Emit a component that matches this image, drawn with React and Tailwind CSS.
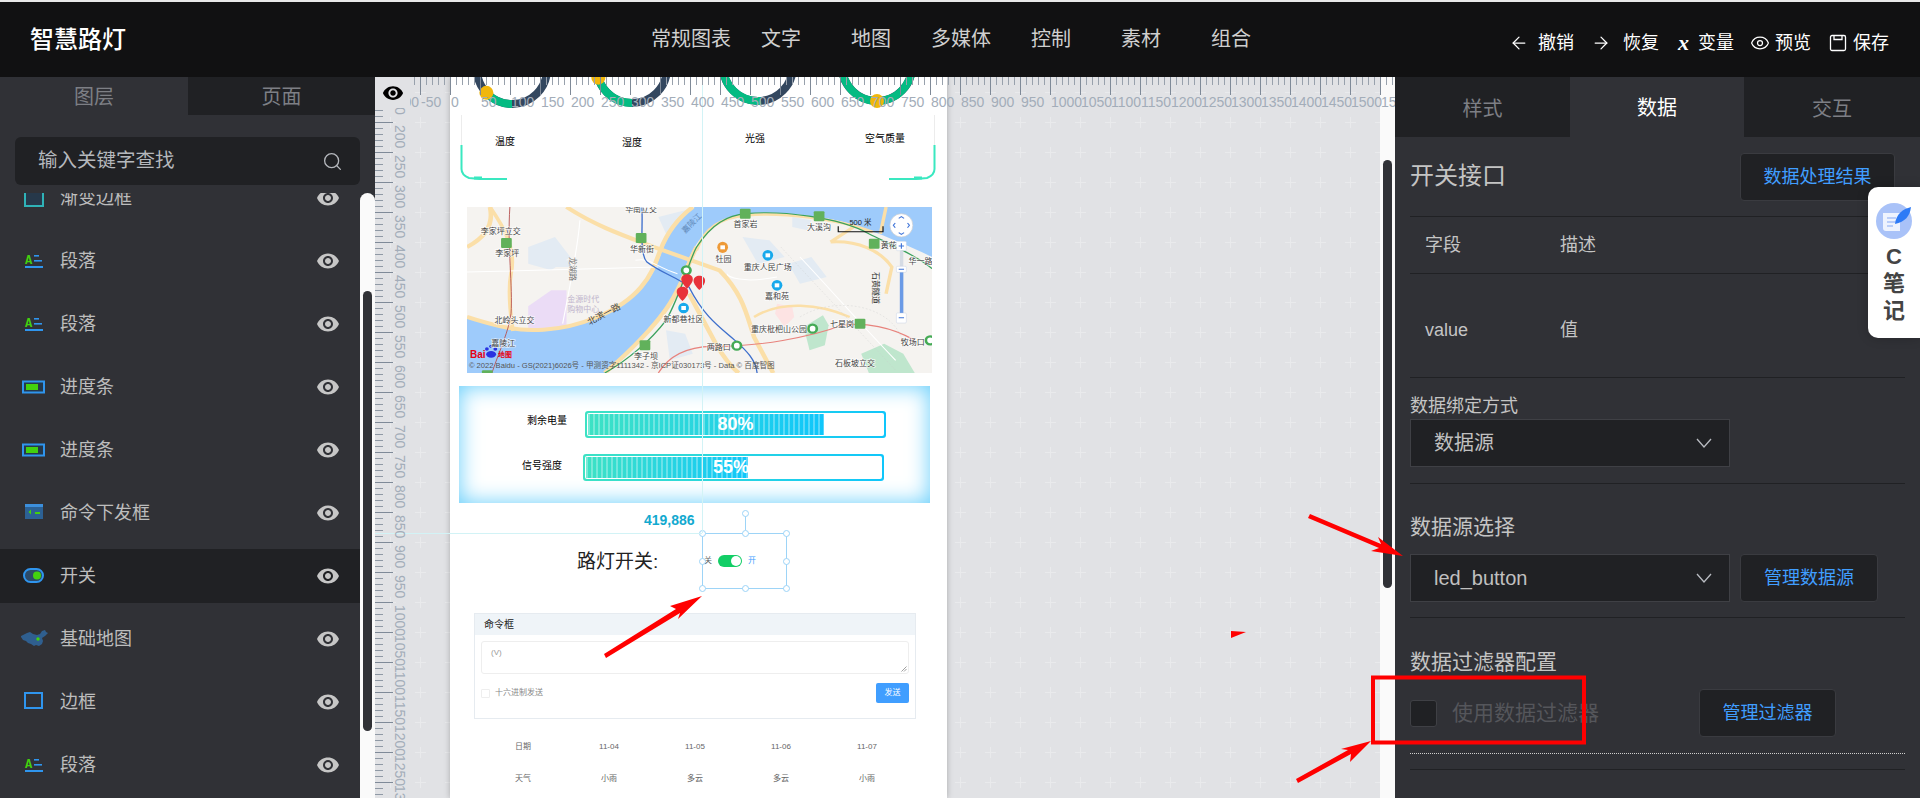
import { ArrowLeft, ArrowRight, Eye, Search } from 'lucide-react';

const navItems = ['常规图表', '文字', '地图', '多媒体', '控制', '素材', '组合'];

const layers = [
  { name: '渐变边框', icon: 'gradient' },
  { name: '段落', icon: 'para' },
  { name: '段落', icon: 'para' },
  { name: '进度条', icon: 'progress' },
  { name: '进度条', icon: 'progress' },
  { name: '命令下发框', icon: 'command' },
  { name: '开关', icon: 'switch', active: true },
  { name: '基础地图', icon: 'map' },
  { name: '边框', icon: 'border' },
  { name: '段落', icon: 'para' },
];

function VisibleEye({ className }) {
  return (
    <svg viewBox="0 0 24 24" className={className} fill="currentColor">
      <path d="M12 4.5C7 4.5 2.73 7.61 1 12c1.73 4.39 6 7.5 11 7.5s9.27-3.11 11-7.5c-1.73-4.39-6-7.5-11-7.5zM12 17c-2.76 0-5-2.24-5-5s2.24-5 5-5 5 2.24 5 5-2.24 5-5 5zm0-8c-1.66 0-3 1.34-3 3s1.34 3 3 3 3-1.34 3-3-1.34-3-3-3z" />
    </svg>
  );
}

function LayerIcon({ type }) {
  if (type === 'gradient') {
    return (
      <svg width="30" height="24" viewBox="0 0 30 24">
        <rect x="5" y="3" width="18" height="17" fill="#26384a" stroke="#2fb3b8" strokeWidth="2" />
      </svg>
    );
  }
  if (type === 'para') {
    return (
      <svg width="30" height="24" viewBox="0 0 30 24">
        <text x="5" y="15" fontSize="12" fontWeight="700" fill="#43d10f" fontFamily="Liberation Mono, monospace">A</text>
        <rect x="14" y="6" width="5" height="1.6" fill="#2f95ee" />
        <rect x="14" y="11" width="8" height="1.6" fill="#2f95ee" />
        <rect x="5" y="17" width="18" height="2" fill="#2f95ee" />
      </svg>
    );
  }
  if (type === 'progress') {
    return (
      <svg width="30" height="24" viewBox="0 0 30 24">
        <rect x="3" y="6.5" width="21" height="11" fill="#25384a" stroke="#2f95ee" strokeWidth="2" />
        <rect x="6" y="9" width="12" height="6" fill="#43d10f" />
      </svg>
    );
  }
  if (type === 'command') {
    return (
      <svg width="30" height="24" viewBox="0 0 30 24">
        <rect x="5" y="3" width="18" height="15" fill="#2c6195" />
        <rect x="5" y="3" width="18" height="3" fill="#3c8fdc" />
        <path d="M11 8.5 8.5 11l2.5 2.500z" fill="#43d10f" />
        <rect x="15" y="11" width="5" height="2" fill="#43d10f" />
      </svg>
    );
  }
  if (type === 'switch') {
    return (
      <svg width="30" height="24" viewBox="0 0 30 24">
        <rect x="4" y="5" width="19" height="13" rx="6.500" fill="#2c4a68" stroke="#2f95ee" strokeWidth="2" />
        <circle cx="17" cy="11.500" r="4" fill="#43d10f" />
      </svg>
    );
  }
  if (type === 'map') {
    return (
      <svg width="30" height="24" viewBox="0 0 30 24">
        <path d="M1 9 7 6l3-1 3 2 4 1 3-1 2-3 3-1 1 2 2 1-3 3-3 2 1 3-1 3-3 2-3-1-2 1-3-2-3-1-2-2-3-1-2-3z" fill="#2f5f8f" />
        <circle cx="18" cy="12" r="1.700" fill="#43d10f" />
      </svg>
    );
  }
  return (
    <svg width="30" height="24" viewBox="0 0 30 24">
      <rect x="5" y="3" width="17" height="15" fill="none" stroke="#2f95ee" strokeWidth="2" />
    </svg>
  );
}

// rulers sit over the page, ticks every 6px, numbers every 30px
function Rulers() {
  const topTicks = [];
  for (let x = 39; x <= 1020; x += 6) {
    const step = (x - 75) % 30 === 0;
    topTicks.push(<line key={x} x1={x + 0.5} x2={x + 0.5} y1="0" y2={step ? 18 : 8} stroke={step ? '#7f8a98' : '#98a1ac'} />);
  }
  const topLabels = [];
  for (let v = -100; v <= 1550; v += 50) {
    topLabels.push(<text key={v} x={75 + v * 0.6 + 1} y="30" fontSize="14" fill="#a3adb9">{v}</text>);
  }
  const sideTicks = [];
  for (let y = 33; y <= 725; y += 6) {
    const step = (y - 45) % 30 === 0;
    sideTicks.push(<line key={y} x1="0" x2={step ? 18 : 8} y1={y + 0.5} y2={y + 0.5} stroke={step ? '#7f8a98' : '#8f99a5'} />);
  }
  const sideLabels = [];
  for (let i = 0; i <= 22; i++) {
    const y = 48 + i * 30;
    sideLabels.push(<text key={i} x="20" y={y} fontSize="14" fill="#a3adb9" transform={`rotate(90 20 ${y})`}>{200 + i * 50}</text>);
  }
  return (
    <svg className="absolute left-0 top-0 w-[1020px] h-[721px] pointer-events-none" viewBox="0 0 1020 721" fontFamily="Liberation Sans, sans-serif">
      {topTicks}
      {topLabels}
      {sideTicks}
      <text x="20" y="30" fontSize="14" fill="#a3adb9" transform="rotate(90 20 30)">0</text>
      {sideLabels}
    </svg>
  );
}

function arc(cx, cy, r, from, to) {
  const p = (a) => [cx + r * Math.cos((a * Math.PI) / 180), cy + r * Math.sin((a * Math.PI) / 180)];
  const [x0, y0] = p(from);
  const [x1, y1] = p(to);
  return `M${x0} ${y0}A${r} ${r} 0 ${to - from > 180 ? 1 : 0} 1 ${x1} ${y1}`;
}

function Gauges() {
  const items = [
    { cx: 62, cy: -8, from: 90, to: 137, dot: 137 },
    { cx: 182, cy: -9, from: 90, to: 164, dot: 164 },
    { cx: 308, cy: -11, from: 85, to: 200 },
    { cx: 427, cy: -11, from: -20, to: 200, dot: 90 },
  ];
  return (
    <svg className="absolute left-0 top-0 w-[497px] h-[44px]" viewBox="0 0 497 44">
      {items.map((g) => (
        <g key={g.cx}>
          <circle cx={g.cx} cy={g.cy} r="35" fill="none" stroke="#33475f" strokeWidth="8" />
          <path d={arc(g.cx, g.cy, 35, g.from, g.to)} fill="none" stroke="#04bb82" strokeWidth="8" />
          {g.dot && (
            <circle cx={g.cx + 35 * Math.cos((g.dot * Math.PI) / 180)} cy={g.cy + 35 * Math.sin((g.dot * Math.PI) / 180)} r="7" fill="#f1b70c" />
          )}
        </g>
      ))}
    </svg>
  );
}

function CardFrame() {
  return (
    <svg className="absolute left-[10px] top-[38px] w-[476px] h-[66px]" viewBox="0 0 476 66" fill="none">
      <path d="M1.500 0V30M474.500 0V30" stroke="#ececec" />
      <path d="M1.500 30V54Q1.500 60 9 63L20 64H47" stroke="#3ae8c0" strokeWidth="2" />
      <path d="M474.500 30V54Q474.500 60 467 63L456 64H429" stroke="#3ae8c0" strokeWidth="2" />
      <path d="M14 63h8M454 63h8" stroke="#3ae8c0" strokeWidth="3" />
    </svg>
  );
}

const mapLabels = [
  ['华南立交', 735, 448], ['李家坪立交', 368, 516], ['李家坪', 385, 582], ['华新街', 737, 569],
  ['首家岩', 1008, 495], ['大溪沟', 1200, 504], ['黄花', 1382, 556], ['华一路', 1465, 604],
  ['牡园', 950, 598], ['重庆人民广场', 1066, 623], ['嘉和苑', 1090, 710], ['新都巷社区', 846, 778],
  ['北岭头立交', 404, 782], ['重庆枇杷山公园', 1095, 810], ['七星岗', 1260, 793], ['两路口', 938, 862],
  ['李子坝', 748, 890], ['牧场口', 1445, 847], ['石板坡立交', 1294, 911], ['嘉陵江', 375, 852],
];

function BaiduMap() {
  const sx = 465 / 1215;
  const sy = 1 / 3;
  const tx = (x) => (x - 280) * sx;
  const ty = (y) => (y - 440) * sy;
  return (
    <svg className="absolute left-[17px] top-[130px] w-[465px] h-[166px]" viewBox="0 0 465 166" fontFamily="Noto Sans CJK SC, sans-serif">
      <rect width="465" height="166" fill="#f5f3f0" />
      <g transform={`scale(${sx} ${sy})`}>
        <g transform="translate(-280 -440)" fill="none">
          <path d="M440 560l70-30 40 60-50 40-60-20zM500 600h50v20h-50zM780 470l70-20 10 30-60 40zM1000 530l70 10 40 50-70 20zM1120 610l60-20 40 60-70 20zM800 810l50 10 20 60-60 20zM1130 470l50 10-10 30-40-10z" fill="#e3ebf3" />
          <path d="M500 690h40v110l-100 8v-70z" fill="#ebdcf6" />
          <path d="M1090 730l40 10 5 30-25 30-25-40z" fill="#fde3e3" />
          <path d="M1160 800l50-35 15 30-10 60-40 15z" fill="#bfe6cd" />
          <path d="M1310 880l60-30 50 30 30 58h-120z" fill="#bfe6cd" />
          <path d="M280 770C340 790 400 820 480 812C570 805 680 760 740 680C770 640 780 600 790 570C810 510 840 470 875 440L1495 440L1495 590C1440 560 1380 530 1330 510C1250 470 1100 450 1010 460C950 470 900 510 875 560C860 590 850 620 830 680C800 760 720 860 640 938L280 938Z" fill="#9ecbfb" />
          <g stroke="#fbdfa8" strokeWidth="12">
            <path d="M280 560C330 530 350 490 340 440" />
            <path d="M340 440C370 490 410 560 395 640C385 700 395 770 400 812" strokeWidth="10" />
            <path d="M280 770C340 790 400 815 480 808C570 802 680 755 735 680C765 640 775 600 785 570C805 510 835 470 870 440" />
            <path d="M540 440C620 500 700 530 780 565L940 630C1000 700 1010 760 1030 830L1080 938" />
            <path d="M880 560C860 600 850 650 825 700C790 780 700 880 640 938" />
            <path d="M880 570C900 500 950 470 1010 465C1100 455 1250 475 1340 515" strokeWidth="8" />
            <path d="M1230 545L1290 500M1230 545C1300 540 1360 570 1390 620L1375 700M1375 440L1360 520" strokeWidth="9" />
            <path d="M860 700L930 850C950 890 970 920 990 938" />
            <path d="M1280 770C1200 730 1100 720 1030 770" strokeWidth="7" />
          </g>
          <g stroke="#ffffff" strokeWidth="3">
            <path d="M280 635L780 620M575 480C570 560 555 640 530 790M720 600C760 590 770 620 830 640" />
            <path d="M960 640C960 650 1000 670 1090 650M1150 590C1200 650 1300 780 1400 900" />
          </g>
          <path d="M1100 560L1400 930" stroke="#c9c9c9" strokeDasharray="5 5" />
          <path d="M1150 770C1250 700 1400 740 1420 850" stroke="#c9c9c9" strokeDasharray="5 5" />
          <path d="M392 440C385 560 400 680 395 760C390 810 365 870 345 938" stroke="#b5504f" strokeWidth="2.500" />
          <path d="M737 440C740 500 730 580 750 605C790 640 830 650 860 680C900 770 940 800 980 840C1010 870 1035 900 1038 938" stroke="#3e6fcc" strokeWidth="3.500" />
          <path d="M640 938C700 900 760 840 800 780C840 700 860 600 880 560C920 490 960 465 1010 460C1100 450 1250 470 1330 520C1400 560 1460 590 1495 625" stroke="#3ba15d" strokeWidth="3.500" />
          <path d="M780 938C800 900 840 860 920 858C1040 860 1180 830 1260 795C1320 785 1390 800 1450 840" stroke="#e8837d" strokeWidth="3.500" />
          {[[383, 548], [735, 533], [1007, 460], [1200, 468], [1344, 550], [1307, 790], [745, 855], [333, 945]].map(([x, y]) => (
            <rect key={x} x={x - 14} y={y - 15} width="28" height="30" rx="3" fill="#61b15b" />
          ))}
          {[[853, 630], [985, 856], [1490, 840], [1183, 805]].map(([x, y]) => (
            <ellipse key={x} cx={x} cy={y} rx="11" ry="12" fill="#fff" stroke="#44aa55" strokeWidth="7" />
          ))}
          {[[1066, 585], [1090, 675], [846, 743]].map(([x, y]) => (
            <g key={x}>
              <ellipse cx={x} cy={y} rx="14" ry="16" fill="#17a9ec" />
              <rect x={x - 6} y={y - 6} width="12" height="12" fill="#fff" />
            </g>
          ))}
          <ellipse cx="948" cy="561" rx="14" ry="17" fill="#ee9a38" />
          <rect x="942" y="555" width="12" height="12" fill="#fff" />
          {[[855, 663], [887, 667], [843, 700]].map(([x, y]) => (
            <path key={x} d={`M${x} ${y + 22}C${x - 12} ${y + 8} ${x - 15} ${y} ${x - 15} ${y - 6}C${x - 15} ${y - 26} ${x + 15} ${y - 26} ${x + 15} ${y - 6}C${x + 15} ${y} ${x + 12} ${y + 8} ${x} ${y + 22}Z`} fill="#e8323a" />
          ))}
          <ellipse cx="1415" cy="495" rx="30" ry="35" fill="#fff" stroke="#c9ccd2" strokeWidth="2" />
          <path d="M1408 474l7-5 7 5M1408 517l7 5 7-5M1399 488l-5 7 5 7M1431 488l5 7-5 7" stroke="#3f74d8" strokeWidth="3" />
          <rect x="1402" y="543" width="26" height="28" rx="3" fill="#fff" stroke="#b5c4dd" />
          <path d="M1408 557h14M1415 549v16" stroke="#3f74d8" strokeWidth="3" />
          <rect x="1411" y="571" width="9" height="190" fill="#d5dbe4" />
          <rect x="1411" y="632" width="9" height="128" fill="#6a9ae6" />
          <rect x="1402" y="618" width="26" height="18" rx="3" fill="#fff" stroke="#b5c4dd" />
          <rect x="1402" y="758" width="26" height="30" rx="3" fill="#fff" stroke="#b5c4dd" />
          <path d="M1408 627h14M1408 772h14" stroke="#3f74d8" strokeWidth="3" />
          <path d="M1250 498v16h117v-16" stroke="#111" strokeWidth="3" />
          <g fill="#2932e1">
            <ellipse cx="343" cy="882" rx="13" ry="10" />
            <circle cx="332" cy="866" r="5" />
            <circle cx="343" cy="858" r="5" />
            <circle cx="354" cy="866" r="5" />
          </g>
        </g>
      </g>
      {mapLabels.map(([label, x, y]) => (
        <text key={label} x={tx(x)} y={ty(y) + 2} fontSize="8" textAnchor="middle" fill="#444" stroke="#ffffff" strokeOpacity="0.7" strokeWidth="1.500" paintOrder="stroke">{label}</text>
      ))}
      <text x={tx(600)} y={ty(795)} fontSize="9" fill="#444" transform={`rotate(-28 ${tx(600)} ${ty(795)})`}>北滨一路</text>
      <text x={tx(850)} y={ty(520)} fontSize="8" fill="#5f88b8" transform={`rotate(-45 ${tx(850)} ${ty(520)})`}>嘉陵江</text>
      <text x={tx(1340)} y={ty(635)} fontSize="8" fill="#333" transform={`rotate(90 ${tx(1340)} ${ty(635)})`}>石黄隧道</text>
      <text x={tx(542)} y={ty(725)} fontSize="8" fill="#c0b4cc">金源时代</text>
      <text x={tx(542)} y={ty(755)} fontSize="8" fill="#c0b4cc">购物中心</text>
      <text x={tx(550)} y={ty(590)} fontSize="8" fill="#777" transform={`rotate(90 ${tx(550)} ${ty(590)})`}>龙湖路</text>
      <text x={tx(1308)} y={ty(495)} fontSize="7.500" textAnchor="middle" fill="#222" fontFamily="Liberation Sans, Noto Sans CJK SC, sans-serif">500 米</text>
      <text x={tx(288)} y={ty(892)} fontSize="10" fontWeight="700" fill="#e60012" fontFamily="Liberation Sans, sans-serif">Bai</text>
      <text x={tx(361)} y={ty(890)} fontSize="7" fontWeight="700" fill="#e60012">地图</text>
      <text x={tx(285)} y={ty(924)} fontSize="7.600" fill="#555" fontFamily="Liberation Sans, Noto Sans CJK SC, sans-serif">© 2022 Baidu - GS(2021)6026号 - 甲测资字1111342 - 京ICP证030173号 - Data © 百度智图</text>
    </svg>
  );
}

function ProgressBar({ className, fill, label }) {
  return (
    <div className={`absolute h-[27px] w-[301px] rounded-[3px] bg-gradient-to-r from-[#3de2c4] to-[#0fc6fb] p-[2px] ${className}`}>
      <div className="relative h-full rounded-[2px] bg-white p-[1px]">
        <div className={`h-full bg-gradient-to-r from-[#3de2c4] to-[#0fc6fb] overflow-hidden relative ${fill}`}>
          <div className="absolute inset-0 bg-[repeating-linear-gradient(90deg,rgba(255,255,255,0.3)_0_2px,transparent_2px_5px)]" />
        </div>
        <span className={`absolute inset-0 flex items-center justify-center text-[18px] font-bold text-white ${label === '55%' ? 'pr-[5px]' : ''}`}>{label}</span>
      </div>
    </div>
  );
}

function Handle({ className }) {
  return <span className={`absolute h-[7px] w-[7px] rounded-full border border-[#9dd4f7] bg-white ${className}`} />;
}

function DesignPage() {
  const dates = ['日期', '11-04', '11-05', '11-06', '11-07'];
  const weather = ['天气', '小雨', '多云', '多云', '小雨'];
  return (
    <div className="absolute left-[75px] top-0 h-full w-[497px] bg-white shadow-[0_0_6px_rgba(0,0,0,0.25)] overflow-hidden">
      <Gauges />
      <CardFrame />
      <span className="absolute left-[45px] top-[58px] text-[10px] leading-[14px] text-black">温度</span>
      <span className="absolute left-[172px] top-[59px] text-[10px] leading-[14px] text-black">湿度</span>
      <span className="absolute left-[295px] top-[55px] text-[10px] leading-[14px] text-black">光强</span>
      <span className="absolute left-[415px] top-[55px] text-[10px] leading-[14px] text-black">空气质量</span>
      <BaiduMap />

      <div className="absolute left-[9px] top-[309px] h-[117px] w-[471px] bg-white shadow-[inset_0_0_22px_#63cdfb]">
        <span className="absolute left-[68px] top-[28px] text-[10px] leading-[14px] text-black">剩余电量</span>
        <span className="absolute left-[63px] top-[73px] text-[10px] leading-[14px] text-black">信号强度</span>
        <ProgressBar className="left-[126px] top-[25px]" fill="w-[80%]" label="80%" />
        <ProgressBar className="left-[124px] top-[68px]" fill="w-[55%]" label="55%" />
      </div>

      <span className="absolute left-[194px] top-[435px] text-[14px] font-bold leading-[16px] text-[#12a9cf]">419,886</span>
      <span className="absolute left-[127px] top-[472px] text-[19px] leading-[26px] text-[#222]">路灯开关:</span>

      <div className="absolute left-[252px] top-[456px] h-[56px] w-[85px] border border-[#9dd4f7]">
        <div className="absolute left-[1px] top-[21px] flex items-center gap-[6px] text-[8px] leading-[12px]">
          <span className="text-[#666] w-[7px]">关</span>
          <span className="h-[12px] w-[24px] rounded-full bg-[#13ce66] relative ml-[1px]">
            <span className="absolute right-[1px] top-[1px] h-[10px] w-[10px] rounded-full bg-white" />
          </span>
          <span className="text-[#409eff]">开</span>
        </div>
        <Handle className="-left-[4px] -top-[4px]" />
        <Handle className="left-[39px] -top-[4px]" />
        <Handle className="-right-[4px] -top-[4px]" />
        <Handle className="-left-[4px] top-[24px]" />
        <Handle className="-right-[4px] top-[24px]" />
        <Handle className="-left-[4px] -bottom-[4px]" />
        <Handle className="left-[39px] -bottom-[4px]" />
        <Handle className="-right-[4px] -bottom-[4px]" />
        <span className="absolute left-[42px] -top-[18px] h-[14px] w-px bg-[#9dd4f7]" />
        <Handle className="left-[39px] -top-[24px]" />
      </div>

      <div className="absolute left-[24px] top-[536px] h-[106px] w-[442px] border border-[#e6ebf0] text-[8px] leading-[12px]">
        <div className="h-[21px] bg-[#eff4f8] pl-[9px] text-[10px] leading-[21px] text-[#222]">命令框</div>
        <div className="relative mx-[6px] mt-[6px] h-[33px] rounded-[3px] border border-[#eeeeee] pl-[9px] pt-[5px] text-[#999]">
          (V)
          <svg className="absolute bottom-[1px] right-[1px] h-[6px] w-[6px]" viewBox="0 0 6 6" stroke="#777" strokeWidth="0.700">
            <path d="M0.500 5.500 5.500 0.500M3 5.500 5.500 3" />
          </svg>
        </div>
        <div className="mx-[6px] mt-[9px] flex items-center">
          <span className="h-[9px] w-[9px] rounded-[1px] border border-[#eeeeee]" />
          <span className="ml-[5px] text-[#888]">十六进制发送</span>
          <span className="ml-auto flex h-[20px] w-[33px] items-center justify-center rounded-[2px] bg-[#409eff] text-white">发送</span>
        </div>
      </div>

      <div className="absolute left-[30px] top-[664px] grid w-[430px] grid-cols-5 gap-y-[20px] text-center text-[8px] leading-[12px] text-[#666]">
        {dates.map((d) => <span key={d}>{d}</span>)}
        {weather.map((d, i) => <span key={i}>{d}</span>)}
      </div>
    </div>
  );
}

function DarkButton({ className, children }) {
  return (
    <button className={`flex h-[48px] items-center justify-center rounded-[4px] border border-[#3a3b40] bg-[#202124] text-[18px] text-[#409eff] ${className}`}>
      {children}
    </button>
  );
}

function SelectBox({ children }) {
  return (
    <div className="flex h-[48px] w-[320px] items-center justify-between border border-[#3f4045] bg-[#202124] pl-[23px] pr-[17px] text-[20px] text-[#c0c0c0]">
      <span>{children}</span>
      <svg width="16" height="10" viewBox="0 0 16 10" fill="none" stroke="#b9bcc2" strokeWidth="1.300">
        <path d="M1 1l7 8 7-8" />
      </svg>
    </div>
  );
}

function Annotations() {
  return (
    <svg className="absolute left-0 top-0 w-[1920px] h-[798px] pointer-events-none" viewBox="0 0 1920 798" fill="#ff0000">
      <path d="M604 654 676 609 670 606 702 596 678 619 680 613 606 658z" />
      <path d="M1310 514 1381 544 1378 537 1403 556 1371 551 1379 548 1308 518z" />
      <path d="M1296 779 1348 750 1341 749 1371 741 1350 762 1351 754 1298 783z" />
      <path d="M1231 631 1246 632 1231 638z" />
      <rect x="1373" y="677.500" width="211" height="65" fill="none" stroke="#ff0000" strokeWidth="4" />
    </svg>
  );
}

export default function App() {
  return (
    <div className="relative flex h-[798px] w-[1920px] flex-col overflow-hidden bg-[#fafafa] font-['Liberation_Sans','Noto_Sans_CJK_SC',sans-serif]">
      <div className="h-[2px] bg-[#e8e8e8]" />
      <header className="relative z-10 flex h-[75px] items-center bg-[#111112] text-[20px]">
        <div className="w-[651px] pl-[30px] text-[24px] font-medium text-white">智慧路灯</div>
        <nav className="-ml-[5px] -mt-[1px] flex text-[#cfcfcf]">
          {navItems.map((item) => (
            <span key={item} className="w-[90px] text-center whitespace-nowrap">{item}</span>
          ))}
        </nav>
        <div className="ml-auto flex items-center pr-[31px] pt-[7px] text-[18px] text-white">
          <ArrowLeft size={20} strokeWidth={1.500} />
          <span className="ml-[9px]">撤销</span>
          <ArrowRight size={20} strokeWidth={1.500} className="ml-[17px]" />
          <span className="ml-[12px]">恢复</span>
          <span className="ml-[19px] font-['Liberation_Serif',serif] text-[22px] leading-[18px] font-bold italic">x</span>
          <span className="ml-[9px]">变量</span>
          <Eye size={20} strokeWidth={1.500} className="ml-[16px]" />
          <span className="ml-[5px]">预览</span>
          <svg width="18" height="18" viewBox="0 0 18 18" fill="none" stroke="#fff" strokeWidth="1.300" className="ml-[18px]">
            <rect x="1.500" y="1.500" width="15" height="15" rx="1.500" />
            <path d="M5 1.500v4h8v-4" />
          </svg>
          <span className="ml-[6px]">保存</span>
        </div>
      </header>

      <main className="flex min-h-0 flex-1">
        <aside className="flex w-[375px] shrink-0 flex-col bg-[#303136]">
          <div className="flex h-[38px] text-[20px] text-[#7d7f85]">
            <div className="flex w-[188px] items-center justify-center pt-[2px]">图层</div>
            <div className="flex flex-1 items-center justify-center bg-[#202124] pt-[2px]">页面</div>
          </div>
          <div className="mx-[15px] mt-[22px] flex h-[48px] items-center justify-between rounded-[6px] bg-[#202124] pl-[23px] pr-[17px] text-[19.500px] text-[#b5b8bd]">
            <span>输入关键字查找</span>
            <Search size={21} strokeWidth={1.500} />
          </div>
          <div className="mt-[8px] flex min-h-0 flex-1">
            <div className="w-[360px] overflow-hidden">
              <div className="-mt-[22px]">
                {layers.map((layer, i) => (
                  <div key={i} className={`mb-[9px] flex h-[54px] items-center pl-[20px] pr-[20px] text-[18px] text-[#bdbdbd] ${layer.active ? 'bg-[#202124]' : ''}`}>
                    <LayerIcon type={layer.icon} />
                    <span className="ml-[10px]">{layer.name}</span>
                    <VisibleEye className="ml-auto h-[24px] w-[24px] text-[#c6c6c6]" />
                  </div>
                ))}
              </div>
            </div>
            <div className="w-[15px] rounded-t-full bg-[#fafafa]">
              <div className="ml-[3px] mt-[98px] h-[440px] w-[9px] rounded-full bg-[#303136]" />
            </div>
          </div>
        </aside>

        <section className="relative flex min-w-0 flex-1 overflow-hidden">
          <div className="relative flex-1 bg-[#e1e2e5]">
            <svg className="absolute inset-0 h-full w-full" xmlns="http://www.w3.org/2000/svg">
              <defs>
                <pattern id="cross" x="10" y="10" width="30" height="30" patternUnits="userSpaceOnUse">
                  <path d="M0 5.500H11M5.500 0V11" stroke="#e9eaec" fill="none" />
                </pattern>
              </defs>
              <rect width="100%" height="100%" fill="url(#cross)" />
            </svg>
            <DesignPage />
            <span className="absolute left-[327px] top-0 h-[456px] w-px bg-[#d2f3f6]" />
            <span className="absolute left-0 top-[456px] h-px w-[327px] bg-[#d2f3f6]" />
          </div>
          <div className="w-[15px] shrink-0 bg-[#fafafa]">
            <div className="ml-[3px] mt-[83px] h-[428px] w-[9px] rounded-full bg-[#303136]" />
          </div>
          <Rulers />
          <div className="absolute left-0 top-0 flex h-[31px] w-[35px] items-center justify-center bg-[#e1e2e5]">
            <VisibleEye className="h-[22px] w-[22px] text-black" />
          </div>
        </section>

        <aside className="w-[525px] shrink-0 bg-[#303136]">
          <div className="flex h-[60px] text-[20px] text-[#7d7f85]">
            <div className="flex w-[175px] items-center justify-center bg-[#202124] pt-[3px]">样式</div>
            <div className="flex w-[174px] items-center justify-center pt-[1px] text-white">数据</div>
            <div className="flex flex-1 items-center justify-center bg-[#202124] pt-[3px]">交互</div>
          </div>
          <div className="px-[15px] text-[#c4c4c4]">
            <div className="flex items-center justify-between pr-[10px] pt-[16px]">
              <span className="-mt-[3px] text-[24px]">开关接口</span>
              <DarkButton className="w-[155px]">数据处理结果</DarkButton>
            </div>
            <div className="mt-[15px] flex h-[58px] items-center border-y border-[#202124] pl-[15px] text-[18px]">
              <span className="w-[135px]">字段</span>
              <span>描述</span>
            </div>
            <div className="flex h-[104px] items-center border-b border-[#202124] pl-[15px] pt-[10px] text-[18px]">
              <span className="w-[135px]">value</span>
              <span>值</span>
            </div>
            <div className="pt-[15px] text-[18px] leading-[26px]">数据绑定方式</div>
            <SelectBox>数据源</SelectBox>
            <div className="mt-[16px] border-t border-[#202124] pt-[28px] text-[21px] leading-[30px]">数据源选择</div>
            <div className="mt-[12px] flex gap-[10px]">
              <SelectBox>led_button</SelectBox>
              <DarkButton className="w-[138px]">管理数据源</DarkButton>
            </div>
            <div className="mt-[15px] border-t border-[#202124] pt-[29px] text-[21px] leading-[30px]">数据过滤器配置</div>
            <div className="mt-[12px] flex items-center">
              <span className="h-[27px] w-[27px] rounded-[3px] border border-[#3f4045] bg-[#202124]" />
              <span className="ml-[15px] text-[21px] text-[#55565b]">使用数据过滤器</span>
              <DarkButton className="ml-[100px] w-[137px]">管理过滤器</DarkButton>
            </div>
            <div className="mt-[16px] border-t border-dotted border-[#cfcfcf]" />
            <div className="mt-[15px] border-t border-[#202124]" />
          </div>
        </aside>
      </main>

      <div className="absolute right-0 top-[187px] z-20 flex h-[151px] w-[52px] flex-col items-center rounded-l-[10px] bg-white pt-[15px] text-[22px] font-bold leading-[27px] text-[#444] shadow-[0_0_12px_rgba(0,0,0,0.2)]">
        <svg width="38" height="38" viewBox="0 0 38 38">
          <circle cx="19" cy="19" r="18" fill="#a9c2f8" />
          <path d="M8 11h17v18H11q-3 0-3-3z" fill="#eef3fe" />
          <path d="M12 16h9M12 20h9M12 24h6" stroke="#a9c2f8" strokeWidth="1.500" />
          <path d="M20 22C21 12 28 7 36 5C35 14 30 20 20 22Z" fill="#2e7bf6" />
        </svg>
        <span className="mt-[3px]">C</span>
        <span>笔</span>
        <span>记</span>
      </div>

      <Annotations />
    </div>
  );
}
